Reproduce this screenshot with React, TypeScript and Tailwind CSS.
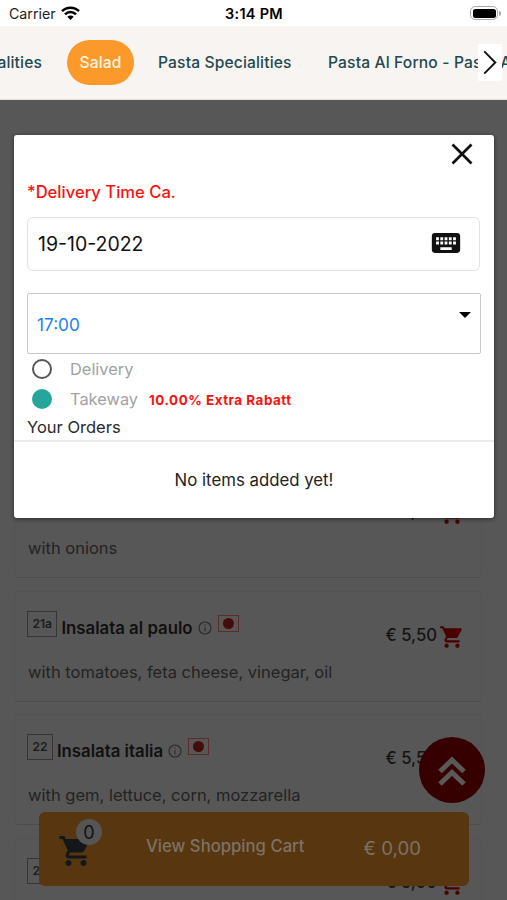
import { MdShoppingCart, MdKeyboard } from "react-icons/md";

type Dish = { no: string; name: string; text: string; price: string };

const dishes: Dish[] = [
  { no: "21", name: "Insalata", text: "with onions", price: "€ 5,00" },
  { no: "21a", name: "Insalata al paulo", text: "with tomatoes, feta cheese, vinegar, oil", price: "€ 5,50" },
  { no: "22", name: "Insalata italia", text: "with gem, lettuce, corn, mozzarella", price: "€ 5,50" },
  { no: "23", name: "Insalata", text: "", price: "€ 5,00" },
];

function InfoIcon() {
  return (
    <svg className="ml-[5px] mt-[10px] size-[14px] shrink-0" viewBox="0 0 14 14" fill="none" stroke="#2c2c2c" strokeWidth="1.2">
      <circle cx="7" cy="7" r="6" />
      <path d="M7 6.2v4M7 3.6v1.2" />
    </svg>
  );
}

function DishCard({ dish }: { dish: Dish }) {
  return (
    <div className="h-[111px] shrink-0 rounded-sm border border-[#535353] border-b-[#4c4c4c] pl-[13px]">
      <div className="flex h-[69px] pt-[19px]">
        <div className="-ml-px flex h-[26px] shrink-0 items-center border border-[#353535] px-[4.5px] text-[12px] font-semibold text-[#1c1c1c]">
          {dish.no}
        </div>
        <div className="ml-1 mt-[5px] h-6 whitespace-nowrap text-[16.8px] leading-6 font-semibold text-[#101010]">{dish.name}</div>
        <InfoIcon />
        <div className="ml-[6px] mt-1 flex h-[17px] w-[21px] shrink-0 items-center justify-center border border-[#5a2c2c]">
          <div className="size-[11px] rounded-full bg-[#450c0c]" />
        </div>
        <div className="ml-auto mr-[16px] flex">
          <div className="mt-3 text-[16.7px] leading-6 font-medium whitespace-nowrap text-[#141414]">{dish.price}</div>
          <MdShoppingCart className="ml-[2px] mt-[13px] size-[26px] text-[#4b0000]" />
        </div>
      </div>
      <div className="text-[16.5px] leading-[22px] text-[#232323]">{dish.text}</div>
    </div>
  );
}

function StatusBar() {
  return (
    <div className="flex h-[26px] items-center bg-white text-[14.2px] text-black">
      <div className="flex flex-1 items-center pl-[9px]">
        <span className="mt-px text-[#222]">Carrier</span>
        <svg className="ml-[5px] h-[14px] w-[19px]" viewBox="0 0 19 14" fill="none" stroke="#000" strokeWidth="2.5">
          <path d="M1 5.2a12 12 0 0 1 17 0M4 8.3a7.8 7.8 0 0 1 11 0" />
          <path d="M6.3 10.8a4.6 4.6 0 0 1 6.4 0L9.5 14z" fill="#000" stroke="none" />
        </svg>
      </div>
      <span className="mt-px mr-[2px] text-[14.5px] font-semibold tracking-[0.25px]">3:14 PM</span>
      <div className="flex flex-1 items-center justify-end pr-[6px]">
        <div className="h-[14px] w-7 rounded-[5px] border border-[#aaa] p-[1.5px]">
          <div className="h-full rounded-[2.5px] bg-black" />
        </div>
        <div className="ml-px h-[5px] w-[2px] rounded-r bg-[#aaa]" />
      </div>
    </div>
  );
}

function Categories() {
  return (
    <div className="relative flex h-[74px] items-center overflow-hidden border-b border-[#e4e0dc] bg-[#f8f4f1] text-[15.6px] font-medium tracking-[0.15px] whitespace-nowrap text-[#1f4a50]">
      <div className="flex w-[42px] shrink-0 justify-end">Specialities</div>
      <div className="ml-[25px] flex h-[45px] w-[67px] shrink-0 items-center justify-center rounded-full bg-[#fb9a2b] text-[#fff3e2]">Salad</div>
      <div className="ml-6 w-[134px] shrink-0">Pasta Specialities</div>
      <div className="ml-9 shrink-0">Pasta Al Forno - Pasta Al Forno</div>
      <div className="absolute top-[18px] left-[478px] flex h-[37px] w-6 items-center justify-center bg-white">
        <svg className="h-[25px] w-[14px]" viewBox="0 0 14 26" fill="none" stroke="#111" strokeWidth="2">
          <path d="M1 1.5 12.5 13 1 24.5" />
        </svg>
      </div>
    </div>
  );
}

function OrderDialog() {
  return (
    <div className="absolute top-[135px] left-[14px] flex h-[383px] w-[480px] flex-col rounded-[3px] bg-white shadow-[0_1px_4px_rgba(0,0,0,0.55)]">
      <div className="flex h-[38px] justify-end pt-2 pr-[21px]">
        <svg className="size-[22px]" viewBox="0 0 22 22" stroke="#111" strokeWidth="2.7">
          <path d="M1.5 1.5 20.5 20.5M20.5 1.5 1.5 20.5" />
        </svg>
      </div>
      <div className="mt-[7px] ml-[13px] h-6 text-[16.6px] leading-6 font-medium text-[#f81212]">*Delivery Time Ca.</div>
      <div className="mt-[13px] ml-[13px] flex h-[54px] w-[453px] items-center justify-between rounded-[6px] border border-[#e2e2e2] pr-[16px] pl-[10px]">
        <span className="mt-[2px] text-[19.5px] text-[#111]">19-10-2022</span>
        <MdKeyboard className="-mt-[3px] size-[34px] text-[#111]" />
      </div>
      <div className="mt-[22px] ml-[13px] flex h-[61px] w-[454px] shrink-0 items-center justify-between rounded-[2px] border border-[#c8c8c8] pr-[9px] pl-[9px]">
        <span className="mt-[2px] text-[17.2px] text-[#1f80f0]">17:00</span>
        <div className="mb-[17px] border-x-[6px] border-t-[6px] border-x-transparent border-t-black" />
      </div>
      <div className="flex h-[30px] shrink-0 items-center pl-[18px]">
        <div className="size-5 rounded-full border-[2.5px] border-[#555]" />
        <span className="mt-px ml-[18px] text-[16.4px] text-[#a2a2a2]">Delivery</span>
      </div>
      <div className="flex h-[30px] shrink-0 items-center pl-[18px]">
        <div className="size-5 rounded-full bg-[#26a69a]" />
        <span className="mt-px ml-[18px] text-[16.4px] text-[#a2a2a2]">Takeway</span>
        <span className="mt-[3px] ml-[11px] text-[13.4px] font-bold tracking-[0.52px] text-[#f81212]">10.00% Extra Rabatt</span>
      </div>
      <div className="flex h-[28px] shrink-0 items-center border-b-2 border-[#ebebeb] pl-[13px] text-[16.5px] text-[#2a2a2a]">Your Orders</div>
      <div className="flex flex-1 items-center justify-center pt-[2px] text-[16.8px] text-[#222]">No items added yet!</div>
    </div>
  );
}

export default function App() {
  return (
    <div className="relative h-[900px] w-[507px] overflow-hidden bg-[#575757] font-['Inter','Liberation_Sans',sans-serif]">
      <StatusBar />
      <Categories />
      <div className="flex flex-col gap-[12.5px] pt-[367px] pr-[25px] pl-[14px]">
        {dishes.map((dish) => (
          <DishCard key={dish.no} dish={dish} />
        ))}
      </div>
      <div className="absolute top-[812px] left-[39px] flex h-[74px] w-[430px] rounded-[6px] bg-[#58360f]">
        <div className="relative w-[107px]">
          <MdShoppingCart className="absolute top-[21px] left-[19px] size-9 text-[#12171a]" />
          <div className="absolute top-[7px] left-[37px] flex size-[26px] items-center justify-center rounded-full bg-[#555] text-[18px] text-[#111]">0</div>
        </div>
        <div className="mt-[22px] h-6 text-[16.7px] leading-6 font-medium text-[#7d7267]">View Shopping Cart</div>
        <div className="mt-[25px] mr-[48px] ml-auto h-6 text-[18.7px] leading-6 text-[#7d7267]">€ 0,00</div>
      </div>
      <div className="absolute top-[737px] left-[419px] flex size-[66px] items-center justify-center rounded-full bg-[#360000]">
        <svg className="mt-[2px] h-[30px] w-7" viewBox="0 0 28 30" fill="none" stroke="#595959" strokeWidth="5">
          <path d="M2 15.5 14 4 26 15.5M2 28 14 16.5 26 28" />
        </svg>
      </div>
      <OrderDialog />
    </div>
  );
}
